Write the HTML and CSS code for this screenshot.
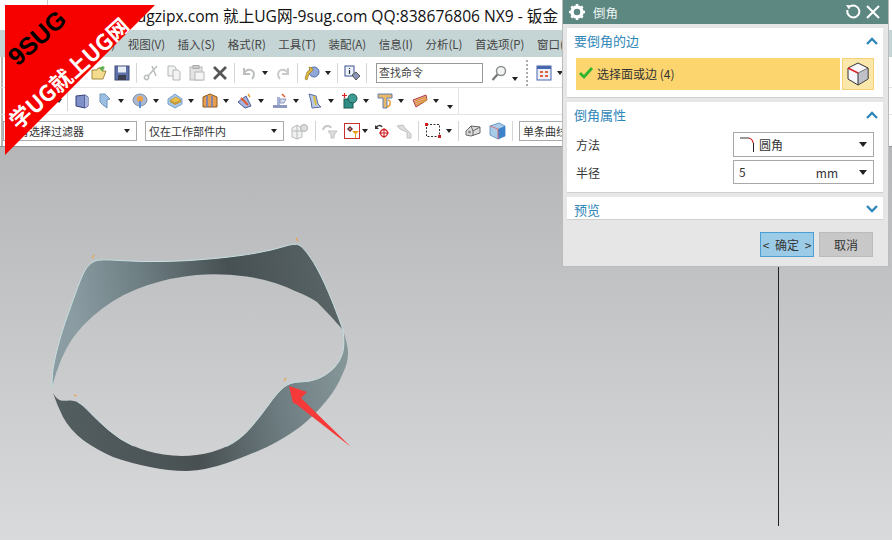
FILE: index.html
```html
<!DOCTYPE html>
<html lang="zh-CN">
<head>
<meta charset="utf-8">
<title>倒角</title>
<link rel="stylesheet" href="styles.css">
</head>
<body>
<svg class="defs" width="0" height="0">
  <defs>
    <symbol id="folder" viewBox="0 0 16 16"><path d="M1 5h5l1-2h5v3h3l-3 8H1z" fill="#f3dc8d" stroke="#a28a42"/><path d="M8 3l4-2 2 2-2 1v3l-3-3z" fill="#5bae4c"/></symbol>
    <symbol id="save" viewBox="0 0 16 16"><rect x="1" y="1" width="14" height="14" fill="#5d70a8" stroke="#3c4a78"/><rect x="4" y="1.500" width="8" height="6" fill="#e8ecf4"/><rect x="4" y="10" width="8" height="5" fill="#3b3f50"/></symbol>
    <symbol id="cut" viewBox="0 0 16 16"><path d="M14 1L5 11M9 1l4 10M2 14a2 2 0 1 0 3-3 2 2 0 0 0-3 3z" fill="none" stroke="#b9bcbc" stroke-width="1.500"/></symbol>
    <symbol id="copy" viewBox="0 0 16 16"><path d="M2 1h6l2 2v8H2z" fill="#f3f3f3" stroke="#b5b8b8"/><path d="M7 5h5l2 2v8H7z" fill="#f3f3f3" stroke="#b5b8b8"/></symbol>
    <symbol id="paste" viewBox="0 0 16 16"><rect x="1" y="2" width="12" height="13" fill="#e3e3e3" stroke="#b5b8b8"/><rect x="4" y="0.500" width="6" height="3" fill="#ccc" stroke="#aaa"/><rect x="6" y="7" width="9" height="8" fill="#f5f5f5" stroke="#b5b8b8"/></symbol>
    <symbol id="del" viewBox="0 0 16 16"><path d="M2 2l12 12M14 2L2 14" stroke="#555" stroke-width="2.800" fill="none"/></symbol>
    <symbol id="undo" viewBox="0 0 16 16"><path d="M3 3v6h6M3 8c3-5 9-4 10 1 0 2-1 4-2 5" fill="none" stroke="#bcbfbf" stroke-width="2"/></symbol>
    <symbol id="redo" viewBox="0 0 16 16"><path d="M13 3v6H7M13 8c-3-5-9-4-10 1 0 2 1 4 2 5" fill="none" stroke="#c9cbcb" stroke-width="2"/></symbol>
    <symbol id="wheel" viewBox="0 0 16 16"><circle cx="10" cy="7" r="5" fill="#8fa8d8" stroke="#5570a8"/><path d="M5 2a4 4 0 0 1 4 3L5 9 3 15 1 14l2-7 3-2z" fill="#e0b840" stroke="#8c6e1c" stroke-width=".6"/></symbol>
    <symbol id="info" viewBox="0 0 16 16"><rect x="1" y="1" width="9" height="10" fill="#eef2fb" stroke="#39508c"/><path d="M5.500 3v1M5.500 5v4" stroke="#234" stroke-width="1.200"/><path d="M8 10l4-3 4 4-4 4z" fill="#8a96b8" stroke="#555"/></symbol>
    <symbol id="mag" viewBox="0 0 16 16"><circle cx="10" cy="6" r="4.500" fill="#f2f4f4" stroke="#8c8f8f" stroke-width="1.500"/><path d="M6.500 9.500L1.500 15" stroke="#777" stroke-width="2.200"/></symbol>
    <symbol id="cal" viewBox="0 0 16 16"><rect x="1" y="1" width="14" height="14" fill="#edf0fa" stroke="#4a66ac"/><rect x="1" y="1" width="14" height="3" fill="#4a66ac"/><path d="M4 6h3v2H4zM9 6h3v2H9zM4 10h3v2H4zM9 10h3v2H9z" fill="#e0603a"/></symbol>
    <symbol id="box" viewBox="0 0 16 16"><path d="M2 3l9-1 3 2v9l-3 2-9-2z" fill="#7f8fc8" stroke="#35427c"/><path d="M11 2v13" stroke="#35427c"/><path d="M11 2l3 2v9l-3 2z" fill="#a7b3de"/></symbol>
    <symbol id="flag" viewBox="0 0 16 16"><path d="M3 1h5l5 5-3 1v8l-4-3-3-3z" fill="#9bc0e4" stroke="#6f93b8"/></symbol>
    <symbol id="disc" viewBox="0 0 16 16"><ellipse cx="8" cy="7" rx="7" ry="6" fill="#a8b8d0" stroke="#8090a8"/><circle cx="8" cy="6" r="3" fill="#f0a040"/><path d="M7 8h2v7H7z" fill="#5c8ed8"/></symbol>
    <symbol id="gold" viewBox="0 0 16 16"><path d="M8 1l7 5v5l-7 4-7-4V6z" fill="#a6c8ec" stroke="#7ba0c8"/><path d="M3 7l6-3 5 3-6 3z" fill="#ecc04c" stroke="#a8842a" stroke-width=".5"/><path d="M3 7v2l5 3 6-3V7l-6 3z" fill="#c8982c"/></symbol>
    <symbol id="pillar" viewBox="0 0 16 16"><path d="M1 4l7-3 7 3v10H1z" fill="#e8a050" stroke="#8b5a20"/><path d="M5 3v11M10 3v11" stroke="#6a7fc0" stroke-width="1.500"/></symbol>
    <symbol id="weld" viewBox="0 0 16 16"><path d="M1 9l8-6 5 10-6 2z" fill="#a7b4e0" stroke="#4a5a98"/><path d="M4 5l7 7" stroke="#e25a2a" stroke-width="2"/><path d="M11 1l2 3" stroke="#e89a2a" stroke-width="1.500"/></symbol>
    <symbol id="stack" viewBox="0 0 16 16"><rect x="1" y="12" width="14" height="3" fill="#8c98c0"/><path d="M5 4h3v8H5z" fill="#a7b4d8"/><path d="M8 6h6l-2 4H8z" fill="#d8dce8" stroke="#8c98c0"/><path d="M10 1l3 3" stroke="#e25a2a" stroke-width="1.500"/></symbol>
    <symbol id="bend" viewBox="0 0 16 16"><path d="M2 1l7 2 2 8 3 3-9 1-1-7z" fill="#b9c8e8" stroke="#5a6aa0"/><path d="M7 3l2 9" stroke="#d8c040" stroke-width="2"/></symbol>
    <symbol id="boss" viewBox="0 0 16 16"><rect x="2" y="6" width="9" height="9" fill="#2d8c84" stroke="#1a5a54"/><circle cx="10.500" cy="5.500" r="4.500" fill="#3e9c94" stroke="#1a5a54"/><path d="M0 2.500h5M2.500 0v5" stroke="#e02020" stroke-width="1.200"/></symbol>
    <symbol id="tee" viewBox="0 0 16 16"><path d="M1 1h14v4h-5v10H6V5H1z" fill="#e8b868" stroke="#5f7fb8"/><path d="M11 7c3 0 3 6-1 7" fill="none" stroke="#e8a030" stroke-width="1.500"/></symbol>
    <symbol id="fan" viewBox="0 0 16 16"><path d="M1 7l13-5 1 5-11 7z" fill="#e8a0a0" stroke="#b04040"/><path d="M3 8l11-4M3 10l12-4M4 12l11-5" stroke="#d8a020"/></symbol>
    <symbol id="ghost" viewBox="0 0 18 18"><path d="M1 6l5-3 5 3v9l-5 2-5-2zM6 3v14M1 9h10" fill="#f0f0f0" stroke="#b9bcbc"/><circle cx="13" cy="6" r="3.500" fill="#ddd" stroke="#b0b3b3"/></symbol>
    <symbol id="gfilter" viewBox="0 0 16 16"><path d="M1 7c1-5 7-5 8-2" fill="none" stroke="#c5c8c8" stroke-width="2"/><path d="M6 8h9l-3 4v3h-3v-3z" fill="#ddd" stroke="#c0c3c3"/></symbol>
    <symbol id="rfilter" viewBox="0 0 16 16"><rect x="0.500" y="0.500" width="15" height="15" fill="#fff" stroke="#c83030"/><path d="M6 3v6M3 6h6" stroke="#c83030"/><circle cx="6" cy="6" r="1.800" fill="none" stroke="#333"/><path d="M8 8h7l-3 3v4h-1v-4z" fill="#e8a020"/></symbol>
    <symbol id="rot" viewBox="0 0 16 16"><path d="M2 5c1-3 5-3 6-1" fill="none" stroke="#333" stroke-width="1.500"/><path d="M1 2v4h4z" fill="#333"/><circle cx="10" cy="10" r="3.500" fill="none" stroke="#d02020" stroke-width="1.300"/><path d="M10 5v10M5 10h10" stroke="#d02020"/></symbol>
    <symbol id="gpart" viewBox="0 0 16 16"><path d="M1 3l6-1 2 3 6 6v4h-4V9L4 6z" fill="#ddd" stroke="#c0c3c3"/></symbol>
    <symbol id="rect" viewBox="0 0 16 16"><rect x="1.500" y="1.500" width="13" height="12" fill="none" stroke="#333" stroke-dasharray="2 1.500"/><rect x="0" y="0" width="3" height="3" fill="#d02020"/><rect x="13" y="12" width="3" height="3" fill="#d02020"/></symbol>
    <symbol id="brick" viewBox="0 0 16 16"><path d="M1 8l5-5 9 1v6l-9 3-5-1z" fill="#dcdcdc" stroke="#666"/><path d="M6 3l2 5 7-4M8 8v5" stroke="#666" fill="none"/><circle cx="4.500" cy="9" r="1.500" fill="#888"/></symbol>
    <symbol id="cube" viewBox="0 0 18 18"><path d="M2 4l9-3 6 3v10l-7 3-8-4z" fill="#a8cce8" stroke="#6a9cc8"/><path d="M10 7l7-3v10l-7 3z" fill="#3e82cc"/><path d="M2 4l8 3v10" stroke="#e85a5a" fill="none" stroke-width=".8"/></symbol>
  </defs>
</svg>

<header class="titlebar">
  <span class="title-text">www.ugzipx.com 就上UG网-9sug.com QQ:838676806 NX9 - 钣金</span>
</header>

<nav class="menubar">
  <span>文件(F)</span><span>编辑(E)</span><span>视图(V)</span><span>插入(S)</span><span>格式(R)</span><span>工具(T)</span><span>装配(A)</span><span>信息(I)</span><span>分析(L)</span><span>首选项(P)</span><span>窗口(O)</span>
</nav>

<section class="toolbars">
  <div class="tb tb1">
    <svg class="ic"><use href="#folder"/></svg>
    <svg class="ic m7"><use href="#save"/></svg>
    <i class="sep"></i>
    <svg class="ic"><use href="#cut"/></svg>
    <svg class="ic m7"><use href="#copy"/></svg>
    <svg class="ic m7"><use href="#paste"/></svg>
    <svg class="ic m7"><use href="#del"/></svg>
    <i class="sep"></i>
    <svg class="ic"><use href="#undo"/></svg>
    <i class="car"></i>
    <svg class="ic m7"><use href="#redo"/></svg>
    <i class="sep"></i>
    <svg class="ic"><use href="#wheel"/></svg>
    <i class="car"></i>
    <i class="sep"></i>
    <svg class="ic"><use href="#info"/></svg>
    <i class="sep"></i>
    <div class="search">查找命令</div>
    <svg class="ic m8"><use href="#mag"/></svg>
    <i class="car low"></i>
    <i class="grip"></i>
    <svg class="ic"><use href="#cal"/></svg>
    <i class="car"></i>
  </div>
  <div class="tb2-wrap">
    <div class="tb tb2">
      <i class="car"></i>
      <i class="sep"></i>
      <div class="g g-first"><svg class="ic"><use href="#box"/></svg></div>
      <div class="g"><svg class="ic"><use href="#flag"/></svg><i class="car"></i></div>
      <div class="g"><svg class="ic"><use href="#disc"/></svg><i class="car"></i></div>
      <div class="g"><svg class="ic"><use href="#gold"/></svg><i class="car"></i></div>
      <div class="g"><svg class="ic"><use href="#pillar"/></svg><i class="car"></i></div>
      <div class="g"><svg class="ic"><use href="#weld"/></svg><i class="car"></i></div>
      <div class="g"><svg class="ic"><use href="#stack"/></svg><i class="car"></i></div>
      <div class="g"><svg class="ic"><use href="#bend"/></svg><i class="car"></i></div>
      <div class="g"><svg class="ic"><use href="#boss"/></svg><i class="car"></i></div>
      <div class="g"><svg class="ic"><use href="#tee"/></svg><i class="car"></i></div>
      <div class="g"><svg class="ic"><use href="#fan"/></svg><i class="car"></i></div>
      <i class="car low"></i>
    </div>
  </div>
  <div class="tb tb3">
    <div class="sel sel1"><span>没有选择过滤器</span><i class="car"></i></div>
    <div class="sel sel2"><span>仅在工作部件内</span><i class="car"></i></div>
    <svg class="ic big m7"><use href="#ghost"/></svg>
    <i class="sep"></i>
    <svg class="ic"><use href="#gfilter"/></svg>
    <svg class="ic m6"><use href="#rfilter"/></svg>
    <i class="car tight"></i>
    <svg class="ic m6"><use href="#rot"/></svg>
    <svg class="ic m6"><use href="#gpart"/></svg>
    <i class="sep"></i>
    <svg class="ic"><use href="#rect"/></svg>
    <i class="car"></i>
    <i class="sep"></i>
    <svg class="ic"><use href="#brick"/></svg>
    <svg class="ic big m7"><use href="#cube"/></svg>
    <i class="sep"></i>
    <div class="sel sel3"><span>单条曲线</span></div>
  </div>
</section>

<main class="viewport">
  <svg class="model" width="892" height="393" viewBox="0 147 892 393">
    <defs>
      <linearGradient id="upper" gradientUnits="userSpaceOnUse" x1="70" y1="300" x2="345" y2="260">
        <stop offset="0" stop-color="#8b9da2"/>
        <stop offset=".25" stop-color="#6f8085"/>
        <stop offset=".58" stop-color="#475052"/>
        <stop offset="1" stop-color="#5b6769"/>
      </linearGradient>
      <linearGradient id="lower" gradientUnits="userSpaceOnUse" x1="60" y1="420" x2="345" y2="370">
        <stop offset="0" stop-color="#535e60"/>
        <stop offset=".45" stop-color="#485052"/>
        <stop offset=".75" stop-color="#6d7c80"/>
        <stop offset="1" stop-color="#859699"/>
      </linearGradient>
    </defs>
    <path fill="url(#upper)" d="M52 387Q52 380 52.500 373.500Q53 367 56.500 352Q60 337 66.500 318.500Q73 300 78 286.500Q83 273 86.500 268Q90 263 95 261Q100 259 120 260.500Q140 262 165 261.500Q190 261 215 258.500Q240 256 256.500 253Q273 250 284 246.500Q295 243 299 245Q303 247 310 257Q317 267 325 284.500Q333 302 343 330Q330 315 317 302Q308 296 295 291Q273 280 246.500 276.500Q220 273 196.500 275Q173 277 148 285Q123 293 103 308Q83 323 71.500 340Q60 357 52 387Z"/>
    <path fill="url(#lower)" d="M53 393Q57 400 61 400.500Q65 401 69 400.500Q73 400 77.500 402Q82 404 89.500 412Q97 420 108.500 430Q120 440 133.500 446Q147 452 163.500 454.500Q180 457 196.500 455Q213 453 226.500 446.500Q240 440 250 428.500Q260 417 268.500 405Q277 393 283.500 387.500Q290 382 300 382Q310 382 318.500 378.500Q327 375 333.500 368.500Q340 362 342.500 353.500Q345 345 343 330Q348 345 348 353Q348 363 343 373Q337 388 327 400Q315 415 300 427Q285 438 267 447Q247 456 227 463Q207 470 187 471Q168 471 150 467Q130 463 113 457Q97 450 83 440Q70 430 63 417Q57 405 53 393Z"/>
    <path class="edge" d="M52 387Q52 380 52.500 373.500Q53 367 56.500 352Q60 337 66.500 318.500Q73 300 78 286.500Q83 273 86.500 268Q90 263 95 261Q100 259 120 260.500Q140 262 165 261.500Q190 261 215 258.500Q240 256 256.500 253Q273 250 284 246.500Q295 243 299 245Q303 247 310 257Q317 267 325 284.500Q333 302 343 330"/>
    <path class="edge" d="M77.500 402Q82 404 89.500 412Q97 420 108.500 430Q120 440 133.500 446M226.500 446.500Q240 440 250 428.500Q260 417 268.500 405Q277 393 283.500 387.500Q290 382 300 382Q310 382 318.500 378.500Q327 375 333.500 368.500Q340 362 342.500 353.500Q345 345 343 330"/>
    <path class="mark" d="M92 258l2-3M298 241l-2-3M284 381l2-3M77 396l-3-1"/>
    <path class="arrow" d="M289 386L307 392L301 398L351 447L296 404L293 403Z"/>
    <path class="axis" d="M778.500 267V526"/>
  </svg>
</main>

<aside class="ribbon">
  <span class="rb-black">9SUG</span>
  <span class="rb-white">学UG就上UG网</span>
</aside>

<section class="dialog">
  <header class="dlg-head">
    <svg class="gear" width="18" height="18" viewBox="0 0 18 18"><circle cx="9" cy="9" r="5" fill="none" stroke="#fff" stroke-width="3.500"/><path d="M9 1v3M9 14v3M1 9h3M14 9h3M3.300 3.300l2.100 2.100M12.600 12.600l2.100 2.100M14.700 3.300l-2.100 2.100M5.400 12.600l-2.100 2.100" stroke="#fff" stroke-width="2.500"/></svg>
    <span class="dlg-title">倒角</span>
    <svg class="head-ic" width="16" height="16" viewBox="0 0 16 16"><path d="M5 2.500A6 6 0 1 1 2.500 6" fill="none" stroke="#fff" stroke-width="2"/><path d="M1 1l5 .5-2 4z" fill="#fff"/></svg>
    <svg class="head-ic" width="14" height="14" viewBox="0 0 14 14"><path d="M1 1l12 12M13 1L1 13" stroke="#fff" stroke-width="2"/></svg>
  </header>
  <div class="dlg-body">
    <div class="panel p1">
      <div class="p-head"><span>要倒角的边</span><svg class="chev" width="12" height="8" viewBox="0 0 12 8"><path d="M1 7l5-5 5 5" fill="none" stroke="#2f86b8" stroke-width="2.300"/></svg></div>
      <div class="pick">
        <div class="pick-bar">
          <svg width="14" height="12" viewBox="0 0 14 12"><path d="M1 6l4 4 8-9" fill="none" stroke="#2fb52f" stroke-width="2.800"/></svg>
          <span>选择面或边 (4)</span>
        </div>
        <div class="pick-btn"><svg width="22" height="24" viewBox="0 0 22 24"><path d="M1 6l10-5 10 5v11l-10 6-10-6z" fill="#f7f7fb" stroke="#333"/><path d="M11 11l10-5v11l-10 6z" fill="#bfc0c8" stroke="#333" stroke-width=".6"/><path d="M1 6l10 5" stroke="#e02020" stroke-width="1.500"/><path d="M11 11v12" stroke="#333" stroke-width=".6"/></svg></div>
      </div>
    </div>
    <div class="panel p2">
      <div class="p-head"><span>倒角属性</span><svg class="chev" width="12" height="8" viewBox="0 0 12 8"><path d="M1 7l5-5 5 5" fill="none" stroke="#2f86b8" stroke-width="2.300"/></svg></div>
      <div class="f-row">
        <label>方法</label>
        <div class="f-sel"><svg width="15" height="15" viewBox="0 0 15 15"><path d="M1 1h9" stroke="#333"/><path d="M10 1c3 1 4 3 4 5" fill="none" stroke="#e02020" stroke-width="1.200"/><path d="M14.500 6v9" stroke="#222"/></svg><span class="val">圆角</span><i class="car"></i></div>
      </div>
      <div class="f-row f-row2">
        <label>半径</label>
        <div class="f-sel"><span class="val val5">5</span><span class="unit">mm</span><i class="car"></i></div>
      </div>
    </div>
    <div class="panel p3">
      <div class="p-head"><span>预览</span><svg class="chev" width="12" height="8" viewBox="0 0 12 8"><path d="M1 1l5 5 5-5" fill="none" stroke="#2f86b8" stroke-width="2.300"/></svg></div>
    </div>
    <div class="actions">
      <button class="btn ok">&lt; 确定 &gt;</button>
      <button class="btn">取消</button>
    </div>
  </div>
</section>
</body>
</html>
```
FILE: styles.css
```css
* { box-sizing: border-box; }
html, body { margin: 0; padding: 0; }
body {
  position: relative;
  width: 892px;
  height: 540px;
  overflow: hidden;
  display: flex;
  flex-direction: column;
  background: #fff;
  font-family: "Noto Sans CJK SC", "Noto Sans", sans-serif;
  font-size: 12px;
  color: #333;
}
.defs { position: absolute; }
i { display: block; font-style: normal; }

.titlebar {
  height: 30px;
  flex: none;
  display: flex;
  justify-content: flex-end;
  align-items: center;
  padding-right: 334px;
  background: #fff linear-gradient(#ccc, #ccc) 47px 0 / 1px 5px no-repeat;
  overflow: hidden;
  white-space: nowrap;
}
.title-text { font-family: "Open Sans", "Noto Sans CJK SC", sans-serif; font-size: 15.600px; color: #111; }

.menubar {
  height: 27px;
  flex: none;
  display: flex;
  align-items: center;
  gap: 12.500px;
  padding-left: 28px;
  background: #c5d5d5;
  font-size: 11.500px;
  white-space: nowrap;
  overflow: hidden;
  color: #444;
}

.toolbars {
  flex: none;
  height: 90px;
  font-size: 11px;
  background: #fff linear-gradient(#b5b7b7, #b5b7b7) 1px 0 / 2px 3px repeat-y;
  border-bottom: 1px solid #8e9191;
}
.tb { display: flex; align-items: center; white-space: nowrap; overflow: hidden; }
.tb1 { height: 31px; padding: 2px 0 0 91px; border-bottom: 1px solid #e2e4e4; }
.tb2-wrap { height: 27px; border-bottom: 1px solid #e2e4e4; }
.tb2 { height: 26px; width: 459px; padding-left: 56px; border-right: 1px solid #e2e4e4; }
.tb3 { height: 31px; padding-left: 3px; }

.ic { width: 16px; height: 16px; flex: none; }
.ic.big { width: 18px; height: 18px; }
.m6 { margin-left: 6px; }
.m7 { margin-left: 7px; }
.m8 { margin-left: 8px; }

.car {
  width: 0; height: 0; flex: none;
  margin-left: 5px;
  border-left: 3.500px solid transparent;
  border-right: 3.500px solid transparent;
  border-top: 4px solid #222;
}
.car.low { margin-top: 12px; }
.car.tight { margin-left: 2px; }
.sep { width: 1px; height: 20px; flex: none; background: #d4d6d6; margin: 0 6px; }
.grip { width: 3px; height: 26px; flex: none; margin: 0 7px 0 8px; border-left: 2px dotted #aaa; }
.search {
  width: 107px; height: 20px; flex: none;
  margin-left: 3px;
  border: 1px solid #999;
  padding-left: 2px;
  line-height: 17px;
  color: #444;
}
.g { width: 35px; flex: none; display: flex; align-items: center; }
.g-first { width: 23px; }
.tb2 > .car:first-child { margin-left: 0; }
.tb2 .sep { margin: 0 6px 0 5px; }
.tb2 > .car.low { margin-left: 0; }

.sel {
  height: 20px; flex: none;
  display: flex;
  align-items: center;
  justify-content: space-between;
  border: 1px solid #aaa;
  padding: 0 3px;
  line-height: 18px;
  overflow: hidden;
}
.sel1 { width: 134px; }
.sel2 { width: 139px; margin-left: 8px; }
.sel3 { width: 60px; justify-content: flex-start; }
.sel .car { margin-left: 0; margin-right: 3px; }

.viewport {
  flex: 1;
  min-height: 0;
  background: linear-gradient(180deg, #b4b6b7 0%, #d9dadb 100%);
}
.model { display: block; }
.edge { fill: none; stroke: #c6dee0; stroke-width: 1; }
.mark { fill: none; stroke: #f0a040; stroke-width: 1.200; }
.arrow { fill: #f63a3a; }
.axis { stroke: #222; stroke-width: 1; }

.ribbon {
  position: absolute;
  left: 5px;
  top: 5px;
  width: 150px;
  height: 150px;
  background: #f60000;
  clip-path: polygon(0 0, 100% 0, 0 100%);
  font-family: "Liberation Sans", "Noto Sans CJK SC", sans-serif;
  font-weight: 700;
  line-height: 1;
  white-space: nowrap;
}
.rb-black, .rb-white { position: absolute; transform: translate(-50%, -50%) rotate(-42deg); }
.rb-black { left: 32px; top: 33px; font-size: 25px; color: #000; }
.rb-white { left: 63px; top: 67px; font-size: 22px; color: #fff; font-family: "Noto Sans CJK SC", sans-serif; font-weight: 700; }

.dialog {
  position: absolute;
  left: 562px;
  top: 0;
  width: 327px;
  height: 267px;
  display: flex;
  flex-direction: column;
  background: #e6e6e6;
  border: 1px solid #bcbcbc;
  border-width: 0 1px 1px;
}
.dlg-head {
  height: 24px;
  flex: none;
  display: flex;
  align-items: center;
  gap: 5px;
  padding: 0 8px 0 5px;
  background: #5d8881;
  color: #eef5f3;
  font-size: 12.500px;
}
.dlg-title { flex: 1; margin-left: 2px; }
.dlg-body { flex: 1; padding: 4px 5px 0 4px; display: flex; flex-direction: column; }
.panel { background: #fff; border-bottom: 1px solid #cfcfcf; }
.p1 { height: 70px; margin-bottom: 4px; }
.p2 { height: 91px; margin-bottom: 4px; }
.p3 { height: 23px; }
.p-head {
  display: flex;
  justify-content: space-between;
  align-items: center;
  height: 25px;
  padding: 0 5px 0 7px;
  font-size: 13px;
  color: #2f86b8;
}
.p3 .p-head { height: 24px; }
.pick { display: flex; gap: 2px; padding: 5px 9px 0 9px; }
.pick-bar {
  flex: 1; height: 32px;
  display: flex; align-items: center; gap: 4px;
  padding: 0 0 2px 3px;
  background: #fcd56e;
  color: #333;
}
.pick-btn {
  width: 32px; height: 32px;
  display: flex; align-items: center; justify-content: center;
  background: #fbe7a9;
  border: 1px solid #f5d27a;
}
.f-row { display: flex; align-items: center; justify-content: space-between; height: 25px; margin: 5px 0 3px; padding: 0 9px; }
.f-row2 { margin-top: 0; height: 24px; }
.f-sel {
  width: 141px; height: 100%;
  display: flex; align-items: center;
  padding: 0 6px 0 5px;
  border: 1px solid #a8a8a8;
  background: #fff;
}
.f-sel .val { flex: 1; margin-left: 5px; }
.f-sel .val5 { margin: 0 0 2px; }
.f-sel .car { margin: 0; border-left-width: 4px; border-right-width: 4px; border-top-width: 5px; border-top-color: #222; }
.unit { margin-right: 21px; }
.actions { display: flex; justify-content: flex-end; gap: 5px; padding: 12px 10px 0 0; }
.btn {
  width: 54px; height: 25px;
  font: inherit;
  color: #333;
  border: 1px solid #bbb;
  background: #c8c8c8;
  padding: 0;
}
.btn.ok { background: #9ccbe8; border-color: #4a9fd4; word-spacing: 3px; }
```
